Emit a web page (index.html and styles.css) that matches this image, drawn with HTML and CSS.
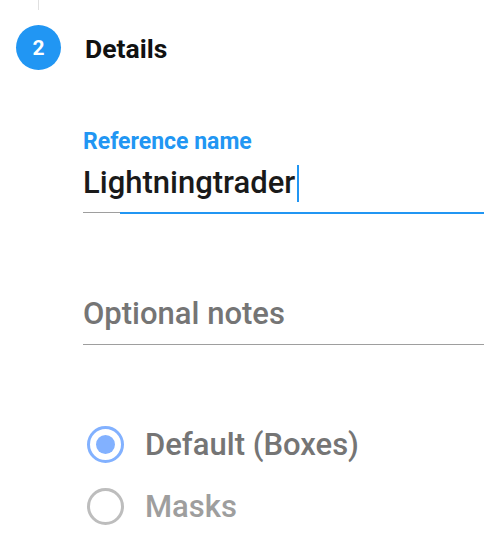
FILE: index.html
```html
<!DOCTYPE html>
<html lang="en">
<head>
  <meta charset="UTF-8">
  <title>Details step</title>
  <link rel="stylesheet" href="styles.css">
</head>
<body>
  <div class="stepper">
    <div class="step-connector"></div>

    <div class="step-head">
      <div class="step-num">2</div>
      <div class="step-title">Details</div>
    </div>

    <div class="step-body">
      <div class="field field-focused">
        <label class="field-label">Reference name</label>
        <div class="field-input">Lightningtrader<span class="caret"></span></div>
        <div class="field-line"></div>
      </div>

      <div class="field field-empty">
        <div class="field-input placeholder">Optional notes</div>
        <div class="field-line"></div>
      </div>

      <div class="radio-group">
        <div class="radio radio-checked">
          <span class="radio-ring"><span class="radio-dot"></span></span>
          <span class="radio-text">Default (Boxes)</span>
        </div>
        <div class="radio">
          <span class="radio-ring"></span>
          <span class="radio-text">Masks</span>
        </div>
      </div>
    </div>
  </div>
</body>
</html>
```

FILE: styles.css
```css
:root {
  --primary: #2196F3;
  --radio-on: #82B1FF;
  --radio-off: #BDBDBD;
  --text-dark: #1a1a1a;
  --text-muted: #757575;
}

* {
  box-sizing: border-box;
  margin: 0;
  padding: 0;
}

html, body {
  background: #fff;
  font-family: Roboto, "Noto Sans", sans-serif;
  color: var(--text-dark);
}

.stepper {
  padding-left: 16px;
}

.step-connector {
  width: 1px;
  height: 10px;
  margin-left: 22px;
  background: #e0e0e0;
}

.step-head {
  display: flex;
  align-items: center;
  gap: 24px;
  margin-top: 15px;
}

.step-num {
  width: 45px;
  height: 45px;
  border-radius: 50%;
  background: var(--primary);
  color: #fff;
  font-size: 21px;
  font-weight: 700;
  display: flex;
  align-items: center;
  justify-content: center;
}

.step-title {
  font-size: 26.5px;
  font-weight: 700;
  color: #111;
  padding-top: 2px;
}

.step-body {
  padding-left: 67px;
}

.field {
  position: relative;
}

.field-focused {
  margin-top: 60px;
}

.field-label {
  display: block;
  font-size: 23px;
  font-weight: 700;
  line-height: 24px;
  color: var(--primary);
}

.field-input {
  font-size: 31px;
  font-weight: 500;
  line-height: 40px;
  height: 49px;
  padding-top: 9px;
  display: flex;
  align-items: center;
}

.placeholder {
  color: var(--text-muted);
}

.caret {
  display: inline-block;
  width: 2px;
  height: 37px;
  margin-left: 2px;
  background: var(--primary);
}

.field-line {
  position: relative;
  height: 1px;
  background: #9e9e9e;
  margin-top: 9px;
}

.field-focused .field-line::after {
  content: '';
  position: absolute;
  left: 37px;
  right: 0;
  top: 0;
  height: 2px;
  background: var(--primary);
}

.field-empty {
  margin-top: 78px;
}

.field-empty .field-input {
  height: 44px;
  padding-top: 2px;
}

.radio-group {
  margin-top: 81px;
  display: flex;
  flex-direction: column;
  gap: 25px;
}

.radio {
  display: flex;
  align-items: center;
  gap: 21px;
  padding-left: 4px;
}

.radio-ring {
  width: 37px;
  height: 37px;
  border-radius: 50%;
  border: 3px solid var(--radio-off);
  display: flex;
  align-items: center;
  justify-content: center;
}

.radio-checked .radio-ring {
  border-color: var(--radio-on);
}

.radio-dot {
  width: 19px;
  height: 19px;
  border-radius: 50%;
  background: var(--radio-on);
}

.radio-text {
  font-size: 31px;
  font-weight: 500;
  color: #9e9e9e;
}

.radio-checked .radio-text {
  color: var(--text-muted);
}
```
